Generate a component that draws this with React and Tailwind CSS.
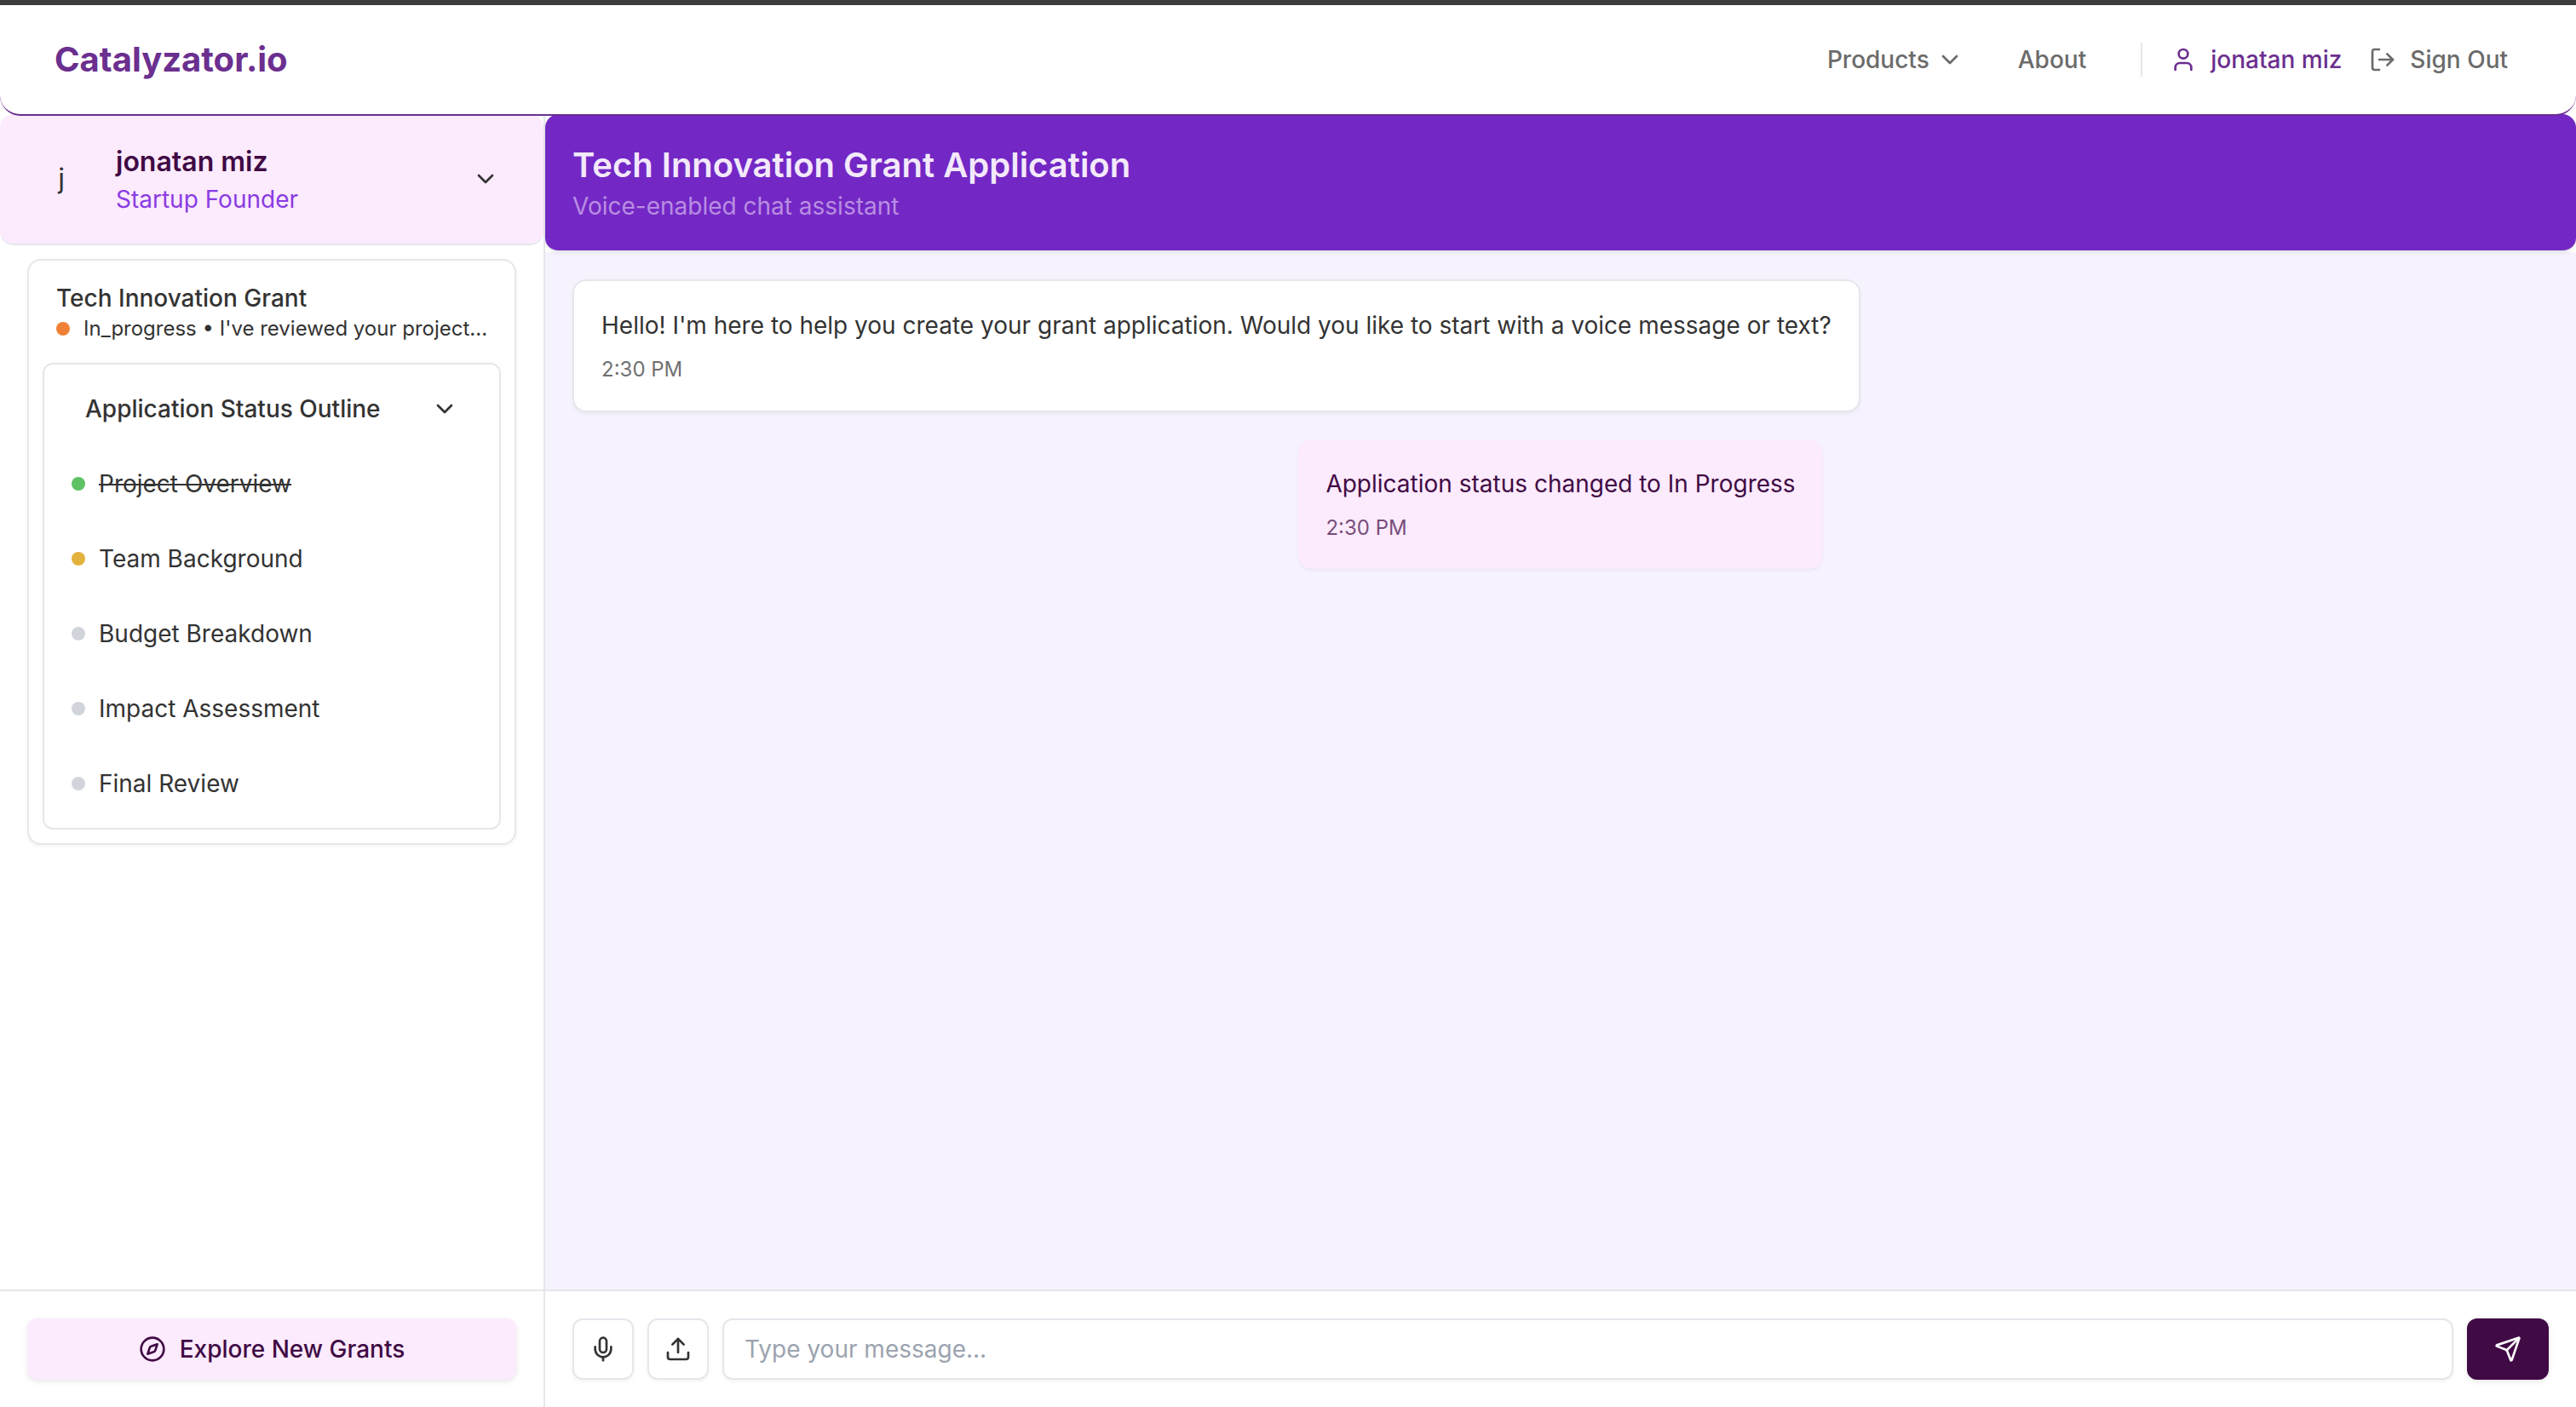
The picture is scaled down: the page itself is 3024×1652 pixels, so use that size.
import { ChevronDown, User, LogOut, Compass, Mic, Upload, Send } from "lucide-react";

const sections = [
  { name: "Project Overview", dot: "bg-[#5dc264]", done: true },
  { name: "Team Background", dot: "bg-[#e3b23c]" },
  { name: "Budget Breakdown", dot: "bg-[#d1d5db]" },
  { name: "Impact Assessment", dot: "bg-[#d1d5db]" },
  { name: "Final Review", dot: "bg-[#d1d5db]" },
];

const softShadow = "shadow-[0_2px_4px_rgba(0,0,0,0.05)]";
const shadow = "shadow-[0_2px_6px_rgba(0,0,0,0.1)]";

function Header() {
  return (
    <header className="relative z-10 flex h-[130px] shrink-0 items-center justify-between rounded-b-3xl border-b-2 border-[#6b2f8f] bg-white px-16">
      <a href="#" className="text-[40px] leading-[56px] font-bold text-[#6b2f8f]">Catalyzator.io</a>
      <nav className="flex items-center text-[28px] leading-10 font-medium text-[#6b6b6b]">
        <button type="button" className="flex items-center gap-2 px-8">
          Products
          <ChevronDown size={32} />
        </button>
        <a href="#" className="px-8">About</a>
        <div className="ml-8 flex items-center border-l-2 border-[#e5e7eb] pl-8">
          <a href="#" className="flex items-center gap-4 text-[#6b2f8f]">
            <User size={32} />
            jonatan miz
          </a>
          <button type="button" className="flex items-center gap-4 pr-4 pl-8">
            <LogOut size={32} />
            Sign Out
          </button>
        </div>
      </nav>
    </header>
  );
}

function Sidebar() {
  return (
    <aside className="flex w-[640px] shrink-0 flex-col border-r-2 border-[#e5e7eb] bg-white">
      <div className="flex items-center rounded-2xl border-b-2 border-[#e5e7eb] bg-[#fceafd] p-8">
        <div className="flex size-20 items-center justify-center rounded-full text-[32px] leading-[48px]">j</div>
        <div className="ml-6 flex-1">
          <h2 className="text-[32px] leading-[48px] font-semibold text-[#400a44]">jonatan miz</h2>
          <p className="text-[28px] leading-10 text-[#8a3be2]">Startup Founder</p>
        </div>
        <button type="button" aria-label="Account menu" className="flex size-[72px] items-center justify-center">
          <ChevronDown size={32} />
        </button>
      </div>
      <div className="flex-1 px-8 py-4">
        <section className={`rounded-2xl border-2 border-[#e5e7eb] bg-white p-4 ${softShadow}`}>
          <div className="pt-2 pb-6 pl-4">
            <h3 className="text-[28px] leading-10 font-medium">Tech Innovation Grant</h3>
            <p className="flex items-center gap-4 text-2xl">
              <span className="size-4 shrink-0 rounded-full bg-[#f08035]" />
              <span className="truncate">In_progress • I've reviewed your project...</span>
            </p>
          </div>
          <div className="flex flex-col gap-4 rounded-xl border-2 border-[#e5e7eb] p-4">
            <button type="button" className="flex h-[72px] items-center justify-between px-8 text-[28px] leading-10 font-medium">
              Application Status Outline
              <ChevronDown size={32} />
            </button>
            <ul className="flex flex-col gap-4">
              {sections.map((s) => (
                <li key={s.name} className="flex h-[72px] items-center gap-4 px-4 text-[28px] leading-10">
                  <span className={`size-4 rounded-full ${s.dot}`} />
                  <span className={s.done ? "line-through" : ""}>{s.name}</span>
                </li>
              ))}
            </ul>
          </div>
        </section>
      </div>
      <div className="border-t-2 border-[#e5e7eb] p-8">
        <button type="button" className={`flex h-[72px] w-full items-center justify-center gap-4 rounded-xl bg-[#fceafd] text-[28px] leading-10 font-medium text-[#400a44] ${shadow}`}>
          <Compass size={32} />
          Explore New Grants
        </button>
      </div>
    </aside>
  );
}

function Chat() {
  return (
    <main className="flex min-w-0 flex-1 flex-col bg-white">
      <div className={`relative rounded-2xl border-b-2 border-[#e5e7eb] bg-[#7328c5] p-8 ${softShadow}`}>
        <h1 className="text-[40px] leading-[56px] font-semibold text-[#f3e9fb]">Tech Innovation Grant Application</h1>
        <p className="text-[28px] leading-10 text-[#b98de2]">Voice-enabled chat assistant</p>
      </div>
      <div className="flex flex-1 flex-col gap-8 bg-[#f6f3fe] p-8">
        <article className={`self-start rounded-2xl border-2 border-[#e5e7eb] bg-white p-8 ${softShadow}`}>
          <p className="text-[28px] leading-10">Hello! I'm here to help you create your grant application. Would you like to start with a voice message or text?</p>
          <time className="mt-4 block text-2xl opacity-70">2:30 PM</time>
        </article>
        <article className={`self-center rounded-2xl bg-[#fceafd] p-8 text-[#400a44] ${softShadow}`}>
          <p className="text-[28px] leading-10">Application status changed to In Progress</p>
          <time className="mt-4 block text-2xl opacity-70">2:30 PM</time>
        </article>
      </div>
      <form className="flex gap-4 border-t-2 border-[#e5e7eb] p-8" onSubmit={(e) => e.preventDefault()}>
        <button type="button" aria-label="Record voice" className={`flex size-[72px] items-center justify-center rounded-xl border-2 border-[#e5e7eb] ${softShadow}`}>
          <Mic size={32} />
        </button>
        <button type="button" aria-label="Upload file" className={`flex size-[72px] items-center justify-center rounded-xl border-2 border-[#e5e7eb] ${softShadow}`}>
          <Upload size={32} />
        </button>
        <input
          type="text"
          aria-label="Message"
          placeholder="Type your message..."
          className={`h-[72px] min-w-0 flex-1 rounded-xl border-2 border-[#e5e7eb] px-6 text-[28px] leading-10 placeholder:text-[#9ca3af] ${softShadow}`}
        />
        <button type="submit" aria-label="Send" className={`flex h-[72px] w-24 items-center justify-center rounded-xl bg-[#400a44] text-white ${shadow}`}>
          <Send size={32} />
        </button>
      </form>
    </main>
  );
}

export default function App() {
  return (
    <div className="flex h-screen flex-col border-t-[6px] border-[#3d3d3d] bg-white font-[Inter,sans-serif] text-[#333]">
      <Header />
      <div className="-mt-0.5 flex min-h-0 flex-1">
        <Sidebar />
        <Chat />
      </div>
    </div>
  );
}
